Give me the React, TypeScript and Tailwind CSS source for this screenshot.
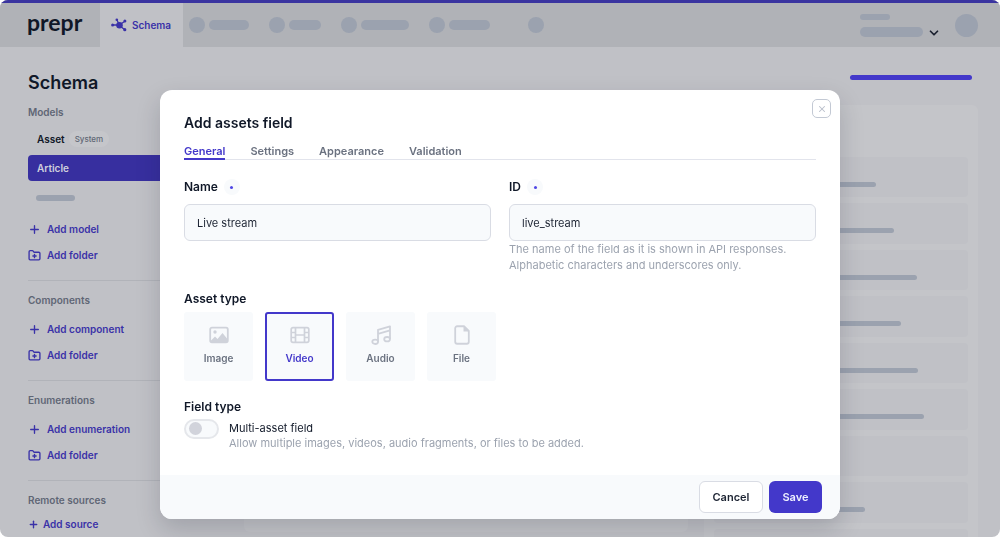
import { useState } from "react";
import type { ReactNode } from "react";
import { ChevronDown, FolderPlus, Plus, X } from "lucide-react";
import clsx from "clsx";

const NAV_ITEMS = ["w-[40px]", "w-[32px]", "w-[48px]", "w-[41px]"];

const FIELD_BARS = [
  "w-[142px]",
  "w-[160px]",
  "w-[183px]",
  "w-[167px]",
  "w-[184px]",
  "w-[190px]",
  "w-0",
  "w-[131px]",
  "w-0",
];

const TABS = ["General", "Settings", "Appearance", "Validation"];

function SchemaIcon() {
  return (
    <svg width="16" height="14" viewBox="0 0 16 14" fill="none" stroke="currentColor" strokeWidth="1.3">
      <path d="M2 7h5M8.500 7.500 6 2M9 6.500l4.500-3M9 8l4.500 3.500" />
      <g fill="currentColor" stroke="none">
        <circle cx="8.500" cy="7.200" r="3.300" />
        <circle cx="1.600" cy="7" r="1.500" />
        <circle cx="5.800" cy="1.800" r="1.300" />
        <circle cx="13.900" cy="3" r="1.500" />
        <circle cx="13.800" cy="11.700" r="1.600" />
      </g>
    </svg>
  );
}

function ImageIcon() {
  return (
    <svg width="20" height="20" viewBox="0 0 20 20" fill="none" stroke="currentColor" strokeWidth="1.8">
      <rect x="1.200" y="2.600" width="17.600" height="14.800" rx="1.800" />
      <circle cx="6" cy="7" r="1.700" fill="currentColor" stroke="none" />
      <path d="M2 17v-1.500l4-4 2.500 2.500 5-6 4.500 5.500V17z" fill="currentColor" stroke="none" />
    </svg>
  );
}

function VideoIcon() {
  return (
    <svg width="20" height="20" viewBox="0 0 20 20" fill="none" stroke="currentColor" strokeWidth="1.7">
      <rect x="1.200" y="2.600" width="17.600" height="14.800" rx="1.800" />
      <path d="M5.500 3v14M14.500 3v14M5.500 10h9M1.500 7.500h4M1.500 12.500h4M14.500 7.500h4M14.500 12.500h4" />
    </svg>
  );
}

function AudioIcon() {
  return (
    <svg width="20" height="20" viewBox="0 0 20 20" fill="none" stroke="currentColor" strokeWidth="1.8" strokeLinejoin="round">
      <path d="M7 16.500V4.800l12-3.500V14M7 8.800l12-3.500" />
      <ellipse cx="4.200" cy="16.800" rx="2.900" ry="2.200" />
      <ellipse cx="16.100" cy="14.200" rx="2.900" ry="2.200" />
    </svg>
  );
}

function FileIcon() {
  return (
    <svg width="20" height="20" viewBox="0 0 20 20" fill="none" stroke="currentColor" strokeWidth="1.8" strokeLinejoin="round">
      <path d="M12 1.250H5.200a2 2 0 0 0-2 2v13.500a2 2 0 0 0 2 2h9.600a2 2 0 0 0 2-2V6z" />
      <path d="M11.500 1v5.500H17z" fill="currentColor" stroke="none" />
    </svg>
  );
}

const ASSET_TYPES: { name: string; icon: ReactNode }[] = [
  { name: "Image", icon: <ImageIcon /> },
  { name: "Video", icon: <VideoIcon /> },
  { name: "Audio", icon: <AudioIcon /> },
  { name: "File", icon: <FileIcon /> },
];

function Header() {
  return (
    <header className="flex h-[47px] shrink-0 border-t-[3px] border-[#3a34a0] bg-[#b0b2b7]">
      <a href="#" className="w-[100px] pl-[27px] font-['Lato',sans-serif] text-[23px] leading-[38px] font-bold text-[#101828]">
        prepr
      </a>
      <a href="#" className="flex w-[83px] items-center gap-[5px] bg-[#c0c1c6] pl-[11px] text-[10px] font-semibold text-[#3a32a8]">
        <SchemaIcon />
        Schema
      </a>
      <div className="ml-1.5 flex items-center gap-5">
        {NAV_ITEMS.map((width) => (
          <div key={width} className="flex items-center gap-1">
            <div className="h-4 w-4 rounded-full bg-[#9ba2af]" />
            <div className={clsx("h-2.5 rounded-full bg-[#9ba2af]", width)} />
          </div>
        ))}
        <div className="ml-[18px] h-4 w-4 rounded-full bg-[#9ba2af]" />
      </div>
      <div className="mr-[22px] ml-auto flex items-center">
        <div className="flex flex-col gap-[7px]">
          <div className="h-1.5 w-[30px] rounded-full bg-[#9ba2af]" />
          <div className="h-2.5 w-[63px] rounded-full bg-[#9ba2af]" />
        </div>
        <ChevronDown className="mt-4 ml-1 h-3.5 w-3.5 text-[#1b2130]" strokeWidth={3} />
        <div className="ml-3.5 h-[23px] w-[23px] rounded-full bg-[#9ba2af]" />
      </div>
    </header>
  );
}

function AddButton({ label, folder }: { label: string; folder?: boolean }) {
  const Icon = folder ? FolderPlus : Plus;
  return (
    <button className="flex h-[26px] items-center gap-1.5 text-[10px] font-semibold text-[#3a32a8]">
      <Icon className="h-[13px] w-[13px]" strokeWidth={2.5} />
      {label}
    </button>
  );
}

function SidebarSection({ title, children }: { title: string; children: ReactNode }) {
  return (
    <section className="border-t border-[#b1b3b9] pt-[9px] pb-3">
      <h2 className="text-[10px] leading-5 font-semibold text-[#5f6675]">{title}</h2>
      {children}
    </section>
  );
}

function Sidebar() {
  return (
    <aside className="w-[200px] shrink-0 pt-6">
      <h1 className="text-[18px] leading-6 font-semibold text-[#101828]">Schema</h1>
      <h2 className="mt-[7px] text-[10px] leading-5 font-semibold text-[#5f6675]">Models</h2>
      <a href="#" className="mt-1 flex h-[26px] items-center gap-1 pl-[9px] text-[10px] font-semibold text-[#101828]">
        Asset
        <span className="rounded-full bg-[#c5c6ca] px-1.5 text-[8px] leading-4 font-medium text-[#5f6675]">System</span>
      </a>
      <a href="#" className="mt-[3px] flex h-[26px] items-center rounded-sm bg-[#372f9f] pl-[9px] text-[10px] font-semibold text-[#cfcfdd]">
        Article
      </a>
      <div className="mt-3.5 mb-[15px] ml-2 h-1.5 w-[39px] rounded-full bg-[#9ba2af]" />
      <div className="pb-3">
        <AddButton label="Add model" />
        <AddButton label="Add folder" folder />
      </div>
      <SidebarSection title="Components">
        <div className="mt-1.5">
          <AddButton label="Add component" />
          <AddButton label="Add folder" folder />
        </div>
      </SidebarSection>
      <SidebarSection title="Enumerations">
        <div className="mt-1.5">
          <AddButton label="Add enumeration" />
          <AddButton label="Add folder" folder />
        </div>
      </SidebarSection>
      <SidebarSection title="Remote sources">
        <button className="mt-1 flex h-5 items-center gap-1 text-[10px] font-semibold text-[#3a32a8]">
          <Plus className="h-[11px] w-[11px]" strokeWidth={3} />
          Add source
        </button>
      </SidebarSection>
    </aside>
  );
}

function Label({ htmlFor, children }: { htmlFor: string; children: ReactNode }) {
  return (
    <label htmlFor={htmlFor} className="flex items-center gap-1.5 text-[12px] leading-5 font-semibold text-[#101828]">
      {children}
      <span className="flex h-4 w-4 items-center justify-center rounded-full bg-[#f8fafc]">
        <span className="h-[3px] w-[3px] rounded-full bg-[#4f46e5]" />
      </span>
    </label>
  );
}

function AddFieldDialog() {
  const [tab, setTab] = useState("General");
  const [assetType, setAssetType] = useState("Video");
  const [name, setName] = useState("Live stream");
  const [id, setId] = useState("live_stream");
  const inputClass =
    "mt-[7px] block h-[37px] w-full rounded-md border border-[#d9dce4] bg-[#f8fafc] px-3 text-[11px] text-[#1d2433] outline-none";

  return (
    <div
      role="dialog"
      aria-labelledby="dialog-title"
      className="w-full max-w-[680px] overflow-hidden rounded-xl bg-white shadow-[0_10px_24px_rgba(16,24,40,0.18)]"
    >
      <div className="px-6 pb-[26px]">
        <div className="flex justify-between">
          <h2 id="dialog-title" className="pt-[23px] text-[14px] leading-5 font-semibold text-[#101828]">
            Add assets field
          </h2>
          <button
            aria-label="Close"
            className="mt-[9px] -mr-[15px] flex h-[19px] w-[19px] items-center justify-center rounded-[5px] border border-[#c3c9d4] text-[#b9bfcb]"
          >
            <X className="h-2.5 w-2.5" strokeWidth={2.5} />
          </button>
        </div>
        <div role="tablist" className="mt-2 flex gap-[25px] border-b border-[#e2e4ec]">
          {TABS.map((t) => (
            <button
              key={t}
              role="tab"
              aria-selected={tab === t}
              onClick={() => setTab(t)}
              className={clsx(
                "-mb-px border-b-2 pt-[3px] text-[11px] leading-[14px] font-semibold",
                tab === t ? "border-[#4338ca] text-[#4338ca]" : "border-transparent text-[#6b7280]"
              )}
            >
              {t}
            </button>
          ))}
        </div>

        <div className="mt-[17px] grid grid-cols-2 gap-[18px]">
          <div>
            <Label htmlFor="name">Name</Label>
            <input id="name" value={name} onChange={(e) => setName(e.target.value)} className={inputClass} />
          </div>
          <div>
            <Label htmlFor="field-id">ID</Label>
            <input id="field-id" value={id} onChange={(e) => setId(e.target.value)} className={inputClass} />
            <p className="text-[11px] leading-4 text-[#9ca3af]">
              The name of the field as it is shown in API responses.
              <br />
              Alphabetic characters and underscores only.
            </p>
          </div>
        </div>

        <fieldset className="mt-4">
          <legend className="text-[12px] leading-5 font-semibold text-[#101828]">Asset type</legend>
          <div className="mt-[3px] flex gap-3">
            {ASSET_TYPES.map(({ name: type, icon }) => (
              <label
                key={type}
                className={clsx(
                  "flex h-[69px] w-[69px] flex-col items-center justify-center gap-[5px] rounded-[3px] border-2 bg-[#f8fafc] pb-[3px] text-[10px] leading-4 font-semibold",
                  assetType === type ? "border-[#4338ca] text-[#4338ca]" : "border-[#f8fafc] text-[#6b7280]"
                )}
              >
                <input
                  type="radio"
                  name="asset-type"
                  checked={assetType === type}
                  onChange={() => setAssetType(type)}
                  className="sr-only"
                />
                <span className="text-[#cfd2da]">{icon}</span>
                {type}
              </label>
            ))}
          </div>
        </fieldset>

        <h3 className="mt-4 text-[12px] leading-5 font-semibold text-[#101828]">Field type</h3>
        <div className="mt-0.5 flex gap-2.5">
          <input
            id="multi"
            type="checkbox"
            role="switch"
            className="h-5 w-[35px] appearance-none rounded-full border-2 border-[#e5e7eb] bg-[#f8fafc] before:mt-px before:ml-[3px] before:block before:h-[13px] before:w-[13px] before:rounded-full before:bg-[#d1d3db] checked:before:ml-4"
          />
          <div>
            <label htmlFor="multi" className="block text-[11px] leading-[18px] text-[#101828]">
              Multi-asset field
            </label>
            <p className="text-[11px] leading-3 text-[#9ca3af]">
              Allow multiple images, videos, audio fragments, or files to be added.
            </p>
          </div>
        </div>
      </div>
      <footer className="flex justify-end gap-1.5 bg-[#f8fafc] px-[18px] py-1.5">
        <button className="h-8 w-16 rounded-md border border-[#d9dce4] bg-white text-[11px] font-semibold text-[#1d2433]">
          Cancel
        </button>
        <button className="h-8 w-[53px] rounded-md bg-[#4338ca] text-[11px] font-semibold text-[#eef0ff]">Save</button>
      </footer>
    </div>
  );
}

export default function App() {
  return (
    <div className="flex h-screen flex-col overflow-hidden rounded-lg bg-[#c0c1c6] font-['Inter',sans-serif]">
      <Header />
      <main className="flex pr-[22px] pl-7">
        <Sidebar />
        <div className="mt-[58px] ml-4 h-[427px] flex-1 rounded-md bg-[#c4c5c9]" />
        <div className="ml-4 flex w-[274px] flex-col">
          <div className="mt-7 mr-1.5 h-[5px] w-[122px] self-end rounded-full bg-[#4338ca]" />
          <div className="mt-[25px] rounded-md bg-[#c4c5c9] px-2.5 pt-[52px] pb-3">
            <div className="grid h-[412px] auto-rows-fr gap-1.5">
              {FIELD_BARS.map((width, i) => (
                <div key={i} className="rounded-sm bg-[#c0c1c6] pt-[25px] pl-5">
                  <div className={clsx("h-[5px] rounded-full bg-[#9ba2af]", width)} />
                </div>
              ))}
            </div>
          </div>
        </div>
      </main>
      <div className="fixed inset-0 flex items-start justify-center px-4 pt-[90px]">
        <AddFieldDialog />
      </div>
    </div>
  );
}
